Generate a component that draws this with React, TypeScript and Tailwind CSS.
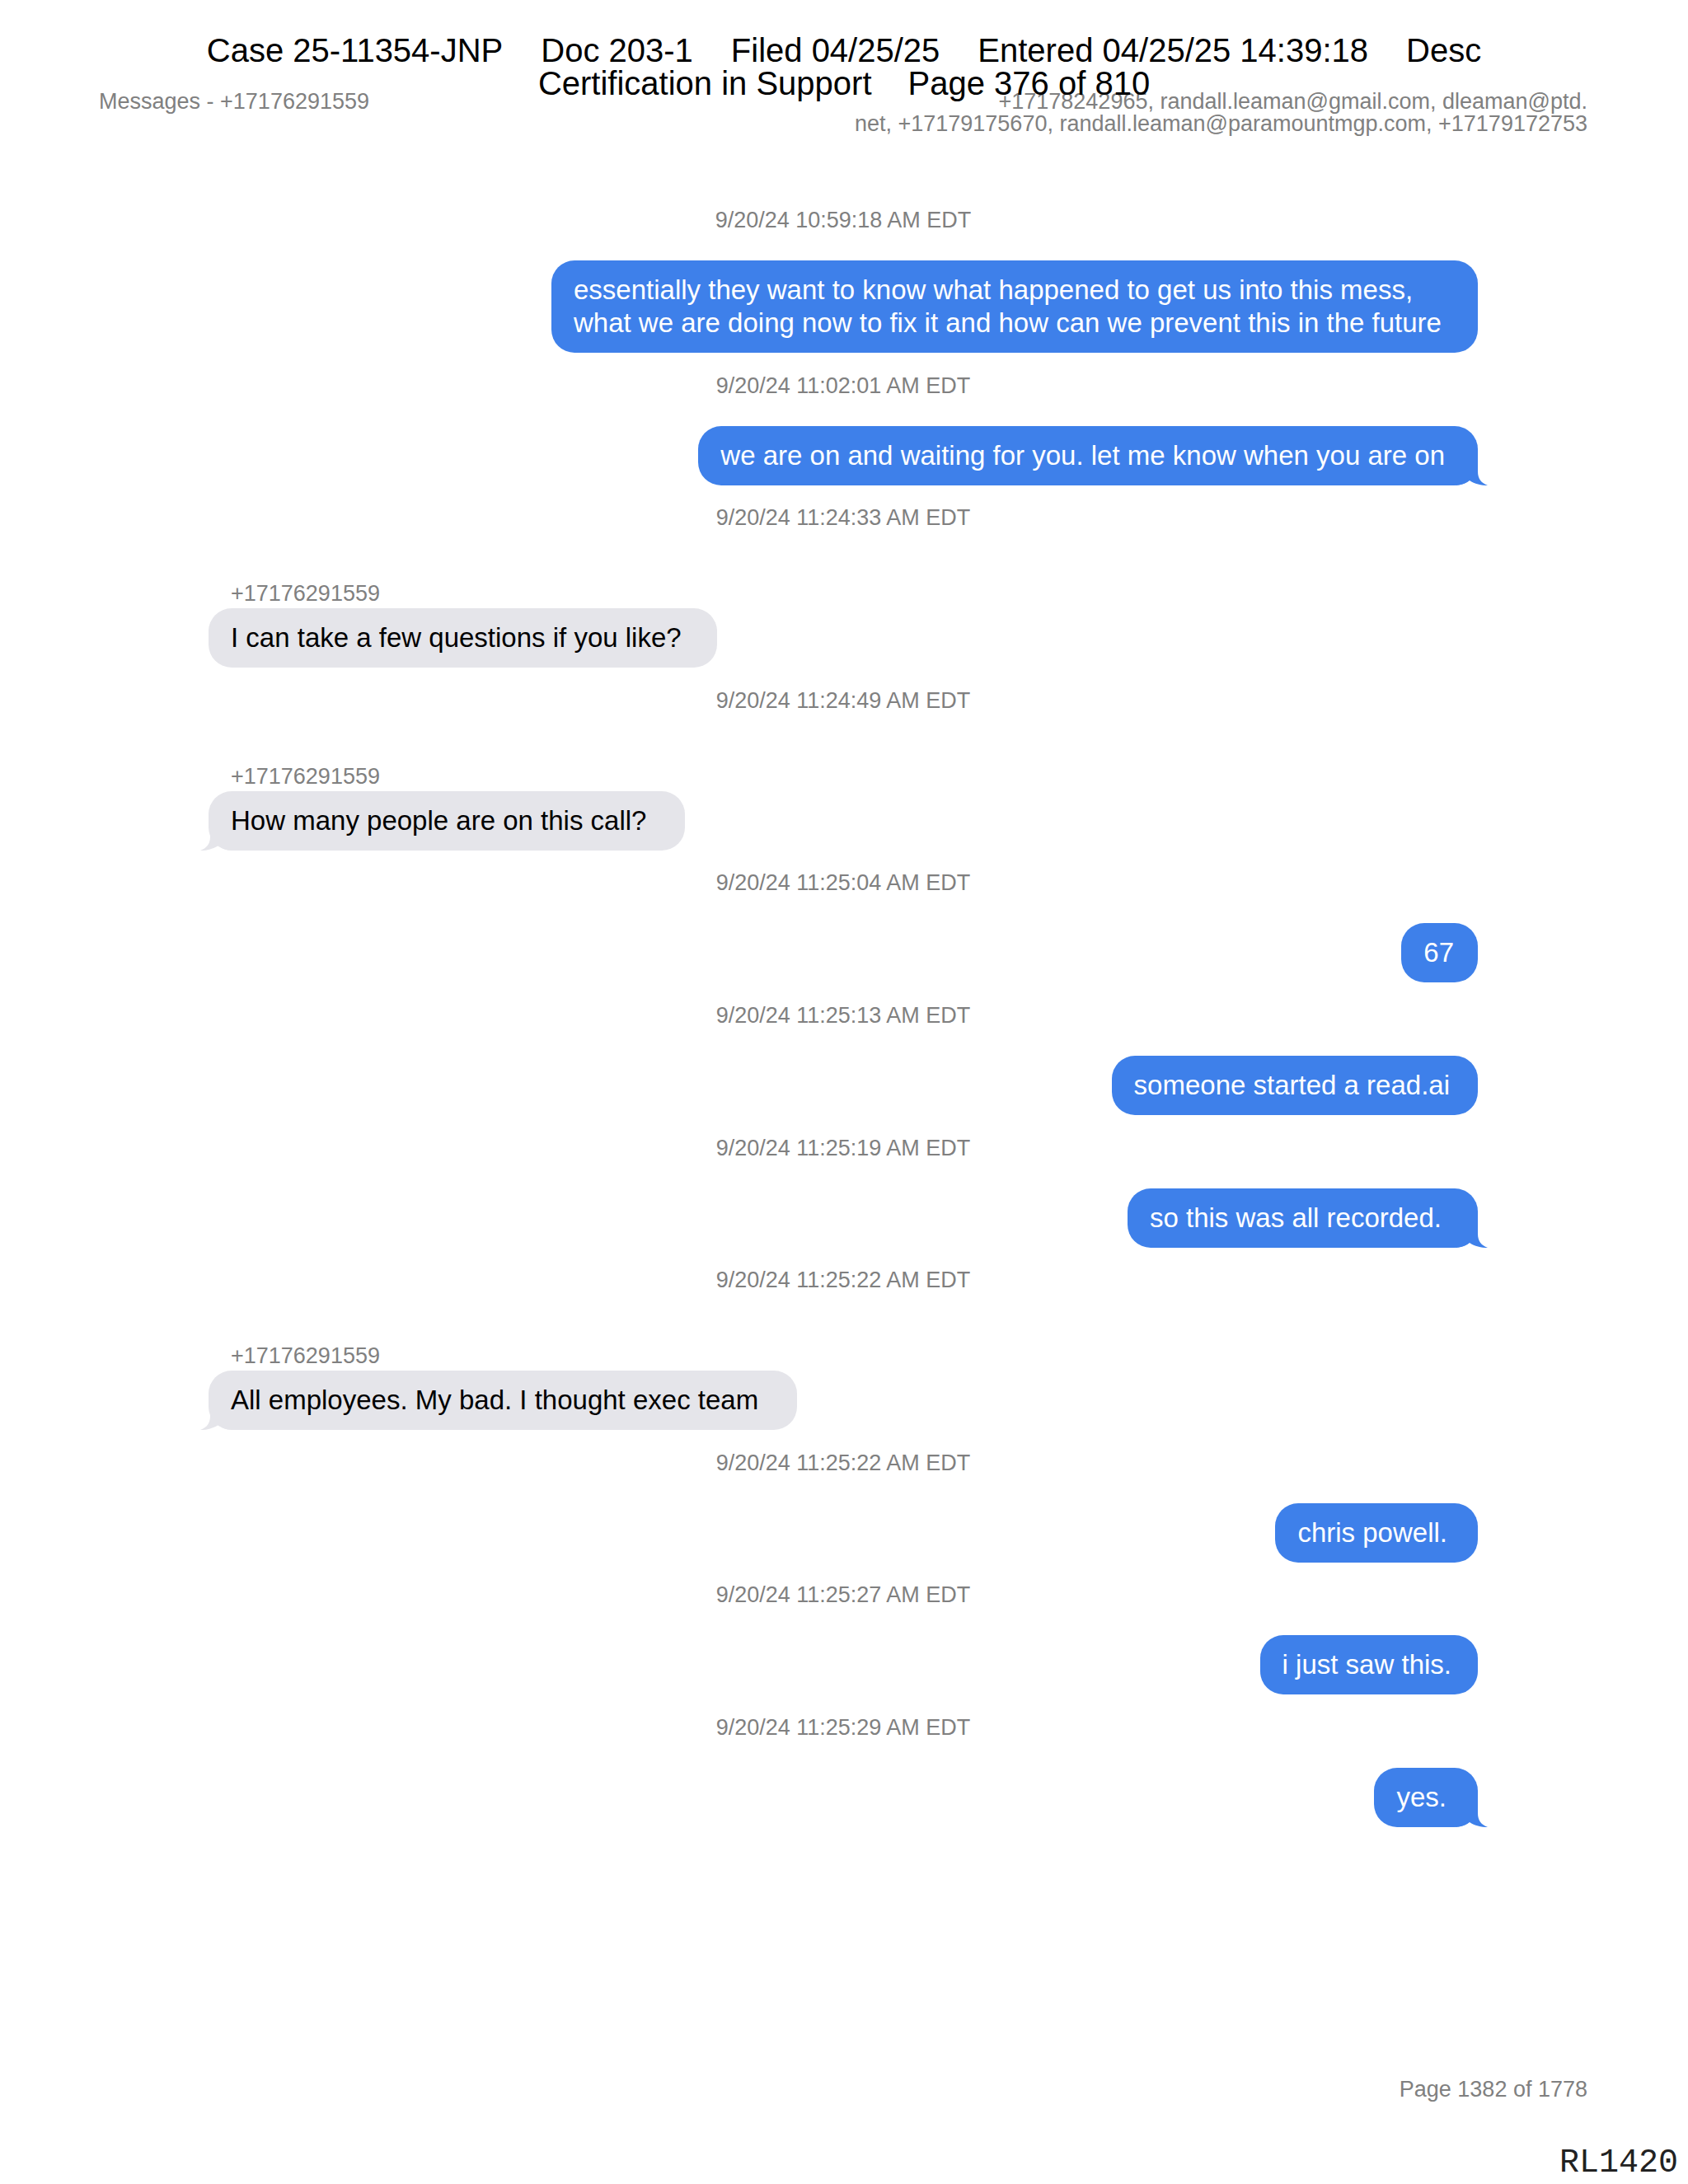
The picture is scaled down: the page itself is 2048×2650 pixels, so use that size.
import React from "react";

type Msg = {
  ts: string;
  text: string;
  me: boolean;
  tail?: boolean;
  pr: string;
};

const SENDER = "+17176291559";

// right padding differs a little per bubble in the export, so it is kept per message
const messages: Msg[] = [
  {
    ts: "9/20/24 10:59:18 AM EDT",
    text: "essentially they want to know what happened to get us into this mess, what we are doing now to fix it and how can we prevent this in the future",
    me: true,
    pr: "pr-[30px]",
  },
  { ts: "9/20/24 11:02:01 AM EDT", text: "we are on and waiting for you. let me know when you are on", me: true, tail: true, pr: "pr-[40px]" },
  { ts: "9/20/24 11:24:33 AM EDT", text: "I can take a few questions if you like?", me: false, pr: "pr-[43px]" },
  { ts: "9/20/24 11:24:49 AM EDT", text: "How many people are on this call?", me: false, tail: true, pr: "pr-[47px]" },
  { ts: "9/20/24 11:25:04 AM EDT", text: "67", me: true, pr: "pr-[29px]" },
  { ts: "9/20/24 11:25:13 AM EDT", text: "someone started a read.ai", me: true, pr: "pr-[34px]" },
  { ts: "9/20/24 11:25:19 AM EDT", text: "so this was all recorded.", me: true, tail: true, pr: "pr-[44px]" },
  { ts: "9/20/24 11:25:22 AM EDT", text: "All employees. My bad. I thought exec team", me: false, tail: true, pr: "pr-[47px]" },
  { ts: "9/20/24 11:25:22 AM EDT", text: "chris powell.", me: true, pr: "pr-[37px]" },
  { ts: "9/20/24 11:25:27 AM EDT", text: "i just saw this.", me: true, pr: "pr-[32px]" },
  { ts: "9/20/24 11:25:29 AM EDT", text: "yes.", me: true, tail: true, pr: "pr-[38px]" },
];

const Tail: React.FC<{ me: boolean }> = ({ me }) => (
  <svg
    width="40"
    height="30"
    viewBox="0 0 40 30"
    className={
      me
        ? "absolute bottom-0 right-[-13px]"
        : "absolute bottom-0 left-[-11px] -scale-x-100"
    }
  >
    <path
      d="M0,0 H27 V13 C27,22 31,27 39,30 C31,30 23,28 17,24 C13,27 8,30 0,30 Z"
      fill={me ? "#3e80ea" : "#e5e5ea"}
    />
  </svg>
);

const Bubble: React.FC<{ m: Msg }> = ({ m }) => (
  <div className={m.me ? "flex justify-end" : "flex justify-start"}>
    <div
      className={clsx(
        "relative max-w-[1124px] rounded-[28px] py-4 pl-[27px] text-[33px] leading-[40px]",
        m.me ? "bg-[#3e80ea] text-white" : "bg-[#e5e5ea] text-black",
        m.pr
      )}
    >
      {m.tail && <Tail me={m.me} />}
      <span className="relative">{m.text}</span>
    </div>
  </div>
);

function clsx(...parts: string[]) {
  return parts.filter(Boolean).join(" ");
}

export default function App() {
  return (
    <div className="relative h-[2650px] w-[2048px] overflow-hidden bg-white font-['Liberation_Sans',Arial,sans-serif]">
      {/* page header of the export */}
      <div className="flex items-start justify-between pl-[120px] pr-[122px] pt-[110px] text-[27px] leading-[27px] text-[#808080]">
        <div>Messages - {SENDER}</div>
        <div className="text-right">
          <div>+17178242965, randall.leaman@gmail.com, dleaman@ptd.</div>
          <div>net, +17179175670, randall.leaman@paramountmgp.com, +17179172753</div>
        </div>
      </div>

      {/* conversation */}
      <div className="ml-[253px] mt-[88px] flex w-[1540px] flex-col">
        {messages.map((m, i) => (
          <div key={i} className="flex flex-col">
            <div className="h-[30px] text-center text-[27px] leading-[30px] text-[#808080]">
              {m.ts}
            </div>
            {m.me ? (
              <div className="mt-[34px]">
                <Bubble m={m} />
              </div>
            ) : (
              <div className="mt-[62px] flex flex-col gap-[3px]">
                <div className="pl-[27px] text-[27px] leading-[30px] text-[#808080]">{SENDER}</div>
                <Bubble m={m} />
              </div>
            )}
            <div className="h-[24.6px]" />
          </div>
        ))}
      </div>

      {/* footer */}
      <div className="absolute bottom-[100px] right-[122px] text-[27px] leading-[30px] text-[#808080]">
        Page 1382 of 1778
      </div>
      <div className="absolute bottom-[3px] right-[12px] font-['Liberation_Mono','Courier_New',monospace] text-[40px] leading-[44px] text-[#222]">
        RL1420
      </div>

      {/* court filing stamp over the page */}
      <div className="absolute left-0 right-0 top-[41px] flex flex-col items-center text-[40px] leading-[40px] text-black">
        <div className="flex gap-[46px]">
          <span>Case 25-11354-JNP</span>
          <span>Doc 203-1</span>
          <span>Filed 04/25/25</span>
          <span>Entered 04/25/25 14:39:18</span>
          <span>Desc</span>
        </div>
        <div className="flex gap-[44px]">
          <span>Certification in Support</span>
          <span>Page 376 of 810</span>
        </div>
      </div>
    </div>
  );
}
